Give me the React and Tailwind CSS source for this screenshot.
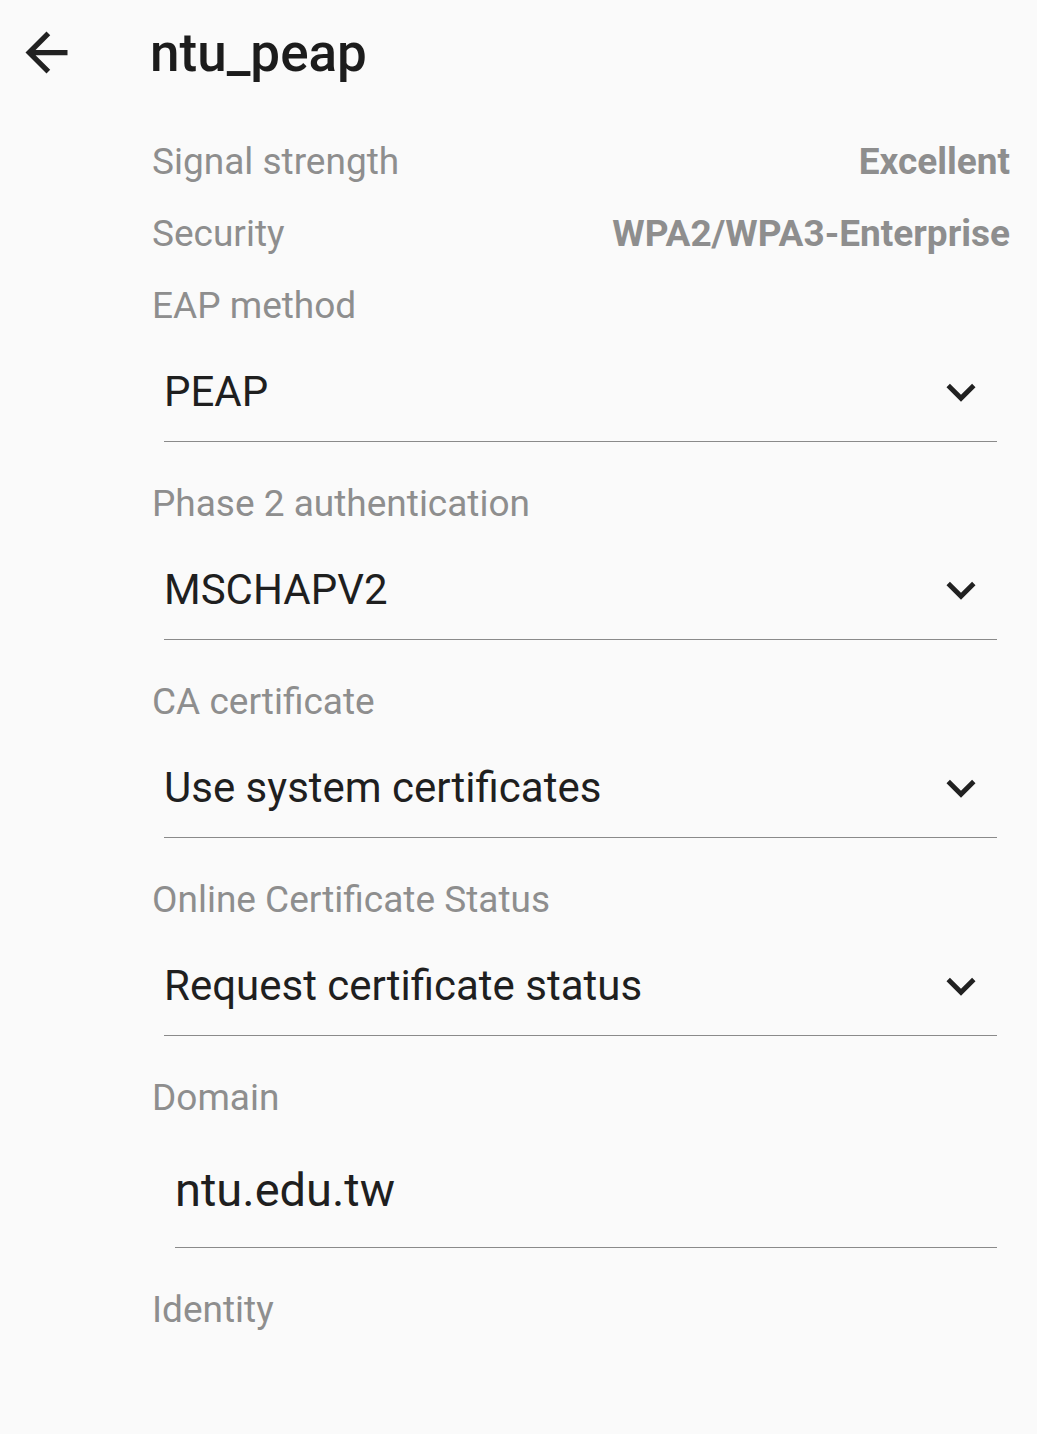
// App.jsx

import React from "react";

function BackArrow() {
  return (
    <svg viewBox="0 0 24 24" className="w-[63px] h-[63px]" fill="#212121">
      <path d="M20 11H7.83l5.59-5.59L12 4l-8 8 8 8 1.41-1.41L7.83 13H20v-2z" />
    </svg>
  );
}

function Chevron() {
  return (
    <svg viewBox="0 0 24 24" className="w-[58px] h-[58px]" fill="#212121">
      <path d="M16.59 8.59L12 13.17 7.41 8.59 6 10l6 6 6-6z" />
    </svg>
  );
}

function InfoRow({ label, value }) {
  return (
    <div className="h-[72px] flex items-center justify-between">
      <span className="text-[37px] text-[#8e8e8e]">{label}</span>
      {value && (
        <span className="text-[37px] font-bold text-[#8e8e8e]">{value}</span>
      )}
    </div>
  );
}

function FieldLabel({ children }) {
  return (
    <div className="mt-[26px] h-[72px] flex items-center">
      <span className="text-[37px] text-[#8e8e8e]">{children}</span>
    </div>
  );
}

function Dropdown({ value }) {
  return (
    <div className="ml-[12px] mr-[13px] h-[100px] flex items-center justify-between border-b border-[#8a8a8a]">
      <span className="text-[42px] text-[#1f1f1f]">{value}</span>
      <span className="mr-[7px]">
        <Chevron />
      </span>
    </div>
  );
}

export default function App() {
  return (
    <div
      className="min-h-[1434px] bg-[#fafafa] text-[#212121]"
      style={{ fontFamily: "Roboto, 'Noto Sans', sans-serif" }}
    >
      {/* Header */}
      <header className="h-[104px] flex items-center">
        <button className="ml-[14px] w-[64px] flex items-center justify-center">
          <BackArrow />
        </button>
        <h1 className="ml-[72px] mt-[2px] text-[53px] font-medium leading-none text-[#1c1c1c]">
          ntu_peap
        </h1>
      </header>

      {/* Details */}
      <main className="pt-[22px] pl-[152px] pr-[27px]">
        <InfoRow label="Signal strength" value="Excellent" />
        <InfoRow label="Security" value="WPA2/WPA3-Enterprise" />
        <InfoRow label="EAP method" />
        <Dropdown value="PEAP" />

        <FieldLabel>Phase 2 authentication</FieldLabel>
        <Dropdown value="MSCHAPV2" />

        <FieldLabel>CA certificate</FieldLabel>
        <Dropdown value="Use system certificates" />

        <FieldLabel>Online Certificate Status</FieldLabel>
        <Dropdown value="Request certificate status" />

        <FieldLabel>Domain</FieldLabel>
        <div className="ml-[23px] mr-[13px] h-[114px] flex items-center border-b border-[#8a8a8a]">
          <span className="text-[47px] text-[#1f1f1f]">ntu.edu.tw</span>
        </div>

        <FieldLabel>Identity</FieldLabel>
      </main>
    </div>
  );
}
